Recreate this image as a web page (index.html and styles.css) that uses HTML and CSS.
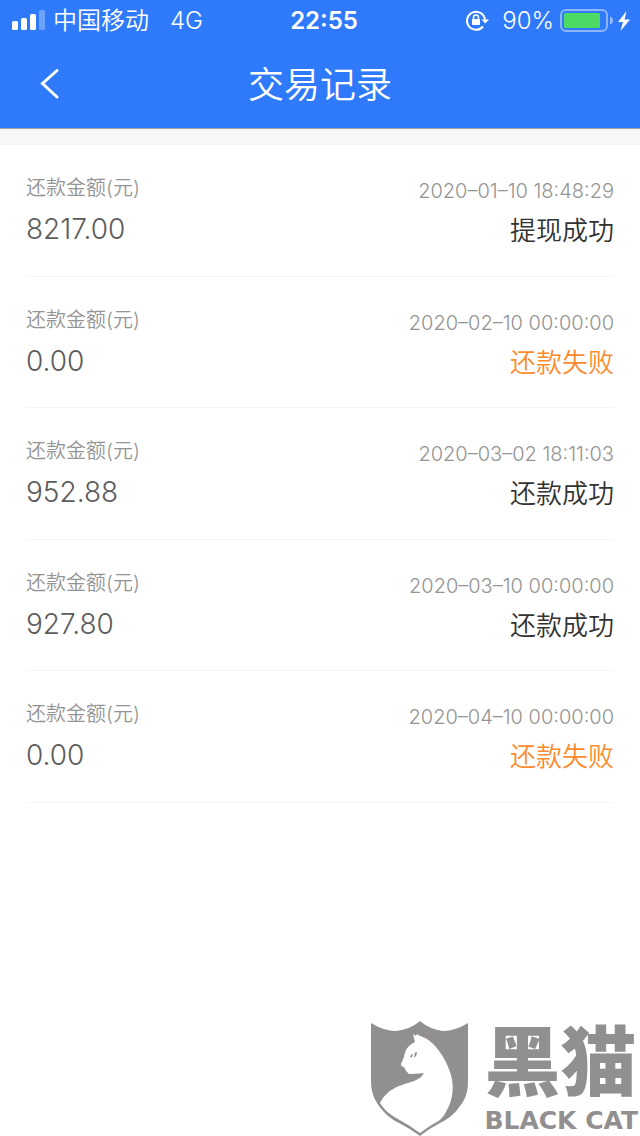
FILE: index.html
```html
<!DOCTYPE html>
<html lang="zh-CN">
<head>
<meta charset="utf-8">
<meta name="viewport" content="width=device-width, initial-scale=1">
<title>交易记录</title>
<link rel="stylesheet" href="styles.css">
</head>
<body>
<header class="header">
  <div class="status">
    <div class="status-left">
      <svg class="signal" width="34" height="22" viewBox="0 0 34 22" aria-hidden="true">
        <rect x="0" y="11" width="6" height="9" rx="1.5"/>
        <rect x="9" y="8" width="6" height="12" rx="1.5"/>
        <rect x="18" y="4" width="6" height="16" rx="1.5"/>
        <rect x="27" y="0" width="6" height="20" rx="1.5" opacity=".3"/>
      </svg>
      <span class="carrier">中国移动</span>
      <span class="network">4G</span>
    </div>
    <time class="clock">22:55</time>
    <div class="status-right">
      <svg class="lock" width="24" height="22" viewBox="0 0 24 22" aria-hidden="true">
        <path d="M17 16.500A9 9 0 1 1 19 10" fill="none" stroke="#fff" stroke-width="2"/>
        <path d="M15.500 9.500h7.500L19.250 13.500z"/>
        <rect x="6" y="9" width="8" height="6" rx=".8"/>
        <path d="M7.500 9.500V7.500a2.500 2.500 0 0 1 5 0V9.500" fill="none" stroke="#fff" stroke-width="1.500"/>
      </svg>
      <span class="percent">90%</span>
      <svg class="battery" width="54" height="24" viewBox="0 0 54 24" aria-hidden="true">
        <rect x="1" y="1" width="46" height="21" rx="5" fill="none" stroke="#fff" stroke-width="2" opacity=".45"/>
        <rect x="4" y="4" width="36" height="15" rx="1.500" fill="#4cd964"/>
        <path d="M50 7.500Q53 8.500 53 11.500T50 15.500z" opacity=".5"/>
      </svg>
      <svg class="bolt" width="12" height="20" viewBox="0 0 12 20" aria-hidden="true">
        <path d="M8.500 0 0 11h5L2.500 20 12 8.500H6.500z"/>
      </svg>
    </div>
  </div>
  <div class="navbar">
    <button class="back" type="button" aria-label="返回">
      <svg width="20" height="32" viewBox="0 0 20 32" aria-hidden="true">
        <path d="M17 1.500 2.500 14.500 17 28" fill="none" stroke="#fff" stroke-width="3" stroke-linecap="round"/>
      </svg>
    </button>
    <h1 class="title">交易记录</h1>
  </div>
</header>
<main class="content">
  <ul class="records">
    <li class="record">
      <div class="info"><span class="label">还款金额(元)</span><span class="amount">8217.00</span></div>
      <div class="result"><time class="date">2020–01–10 18:48:29</time><span class="state">提现成功</span></div>
    </li>
    <li class="record">
      <div class="info"><span class="label">还款金额(元)</span><span class="amount">0.00</span></div>
      <div class="result"><time class="date">2020–02–10 00:00:00</time><span class="state failed">还款失败</span></div>
    </li>
    <li class="record">
      <div class="info"><span class="label">还款金额(元)</span><span class="amount">952.88</span></div>
      <div class="result"><time class="date">2020–03–02 18:11:03</time><span class="state">还款成功</span></div>
    </li>
    <li class="record">
      <div class="info"><span class="label">还款金额(元)</span><span class="amount">927.80</span></div>
      <div class="result"><time class="date">2020–03–10 00:00:00</time><span class="state">还款成功</span></div>
    </li>
    <li class="record">
      <div class="info"><span class="label">还款金额(元)</span><span class="amount">0.00</span></div>
      <div class="result"><time class="date">2020–04–10 00:00:00</time><span class="state failed">还款失败</span></div>
    </li>
  </ul>
</main>
<div class="watermark">
  <svg class="shield" width="98" height="116" viewBox="0 0 98 116" aria-hidden="true">
    <path d="M0 3Q13 11 25 11Q40 9 49 1Q58 9 72 11Q84 11 97 3V61C97 73 94 80 89 86C84 94 77 99 69 103Q59 108 49 116Q38 108 28 103C20 99 13 93 8 86C3 79 0 71 0 61Z" fill="#928f90"/>
    <path d="M42 14 45 16 46 14 49 16Q56 18 61 23C71 32 77 45 80 55C83 66 82 78 77 88Q74 95 69 100Q58 106 49 113Q38 105 27 99Q15 93 9 83C11 79 15 73 22 69C30 64 43 62 47 59Q51 57 53 53Q45 54 38 54Q35 52 33 47Q30 47 30 44L33 37C34 29 38 25 44 22Z" fill="#fff"/>
    <path d="M39 37Q40 33 46 32Q46 37 42 38Z" fill="#928f90"/>
    <path d="M43 32 42 38" stroke="#fff" stroke-width="2"/>
  </svg>
  <div class="brand">
    <span class="brand-cn">黑猫</span>
    <span class="brand-en">BLACK CAT</span>
  </div>
</div>
</body>
</html>
```
FILE: styles.css
```css
* { box-sizing: border-box; }

body {
  margin: 0;
  min-height: 100vh;
  position: relative;
  background: #fff;
  color: #333;
  font-family: Inter, "Noto Sans CJK SC", sans-serif;
}

svg { display: block; flex: none; }

.header {
  background: #2e7afa;
  color: #fff;
  fill: #fff;
  border-bottom: 1px solid #a3a5aa;
}

.status {
  display: grid;
  grid-template-columns: 1fr auto 1fr;
  align-items: center;
  height: 42px;
  padding: 0 10px 0 12px;
  font-size: 24px;
  line-height: 42px;
}

.status-left,
.status-right {
  display: flex;
  align-items: center;
}

.status-right { justify-content: flex-end; }
.carrier { margin-left: 7px; font-weight: 350; }
.network { margin-left: 21px; font-weight: 350; }
.clock { padding-left: 6px; font-weight: 600; }
.percent { margin: 0 6px 0 12px; font-weight: 350; }
.bolt { margin-left: 4px; }

.navbar {
  display: grid;
  grid-template-columns: 100px 1fr 100px;
  align-items: center;
  height: 86px;
}

.back {
  display: flex;
  align-items: center;
  height: 86px;
  padding: 0 0 0 40px;
  border: 0;
  background: none;
}

.title {
  margin: 0;
  text-align: center;
  font-size: 36px;
  font-weight: 350;
  line-height: 86px;
}

.content { border-top: 16px solid #f7f7f7; }

.records {
  margin: 0;
  padding: 0 26px;
  list-style: none;
}

.record {
  display: flex;
  justify-content: space-between;
  padding: 29px 0 27px;
  border-bottom: 1px solid #f5f5f5;
}

.record:nth-child(even) { padding-bottom: 26px; }

.info,
.result {
  display: flex;
  flex-direction: column;
}

.info { gap: 7px; }

.result {
  gap: 8px;
  padding-top: 3px;
  align-items: flex-end;
}

.label,
.date {
  font-size: 20px;
  line-height: 28px;
  font-weight: 350;
  color: #949494;
}

.amount {
  font-size: 28px;
  line-height: 40px;
  font-weight: 350;
  color: #5c5c5c;
}

.state {
  font-size: 26px;
  line-height: 36px;
  font-weight: 350;
}

.failed { color: #fc8b2e; }

.watermark {
  position: absolute;
  right: 2px;
  bottom: 0;
  display: flex;
  align-items: flex-end;
  gap: 15px;
  color: #928f90;
}

.brand {
  display: flex;
  flex-direction: column;
}

.brand-cn {
  font-size: 76px;
  line-height: 88px;
  font-weight: 900;
}

.brand-en {
  font-family: "DejaVu Sans", sans-serif;
  font-size: 25px;
  line-height: 30px;
  font-weight: 700;
}
```
